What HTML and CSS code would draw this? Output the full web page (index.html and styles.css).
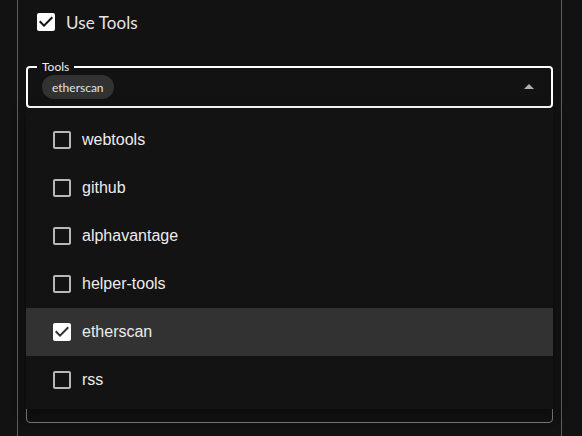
FILE: index.html
```html
<!DOCTYPE html>
<html>
<head>
<meta charset="utf-8">
<link rel="stylesheet" href="styles.css">
</head>
<body>
<div class="panel">
  <label class="use-row">
    <svg class="cb" viewBox="0 0 24 24"><path class="on" d="M19 3H5c-1.11 0-2 .9-2 2v14c0 1.1.89 2 2 2h14c1.11 0 2-.9 2-2V5c0-1.1-.89-2-2-2zm-9 14l-5-5 1.41-1.41L10 14.17l7.59-7.59L19 8l-9 9z"/></svg>
    <span class="use-text">Use Tools</span>
  </label>
  <fieldset class="tools-field">
    <legend class="tools-legend">Tools</legend>
    <div class="tools-row">
      <span class="chip">etherscan</span>
      <svg class="arrow" viewBox="0 0 24 24"><path d="m7 14 5-5 5 5z"/></svg>
    </div>
  </fieldset>
  <fieldset class="next-field"></fieldset>
</div>

<div class="menu">
  <ul class="menu-list">
    <li class="item"><svg class="cb" viewBox="0 0 24 24"><path class="off" d="M19 5v14H5V5h14m0-2H5c-1.1 0-2 .9-2 2v14c0 1.1.9 2 2 2h14c1.1 0 2-.9 2-2V5c0-1.1-.9-2-2-2z"/></svg><span>webtools</span></li>
    <li class="item"><svg class="cb" viewBox="0 0 24 24"><path class="off" d="M19 5v14H5V5h14m0-2H5c-1.1 0-2 .9-2 2v14c0 1.1.9 2 2 2h14c1.1 0 2-.9 2-2V5c0-1.1-.9-2-2-2z"/></svg><span>github</span></li>
    <li class="item"><svg class="cb" viewBox="0 0 24 24"><path class="off" d="M19 5v14H5V5h14m0-2H5c-1.1 0-2 .9-2 2v14c0 1.1.9 2 2 2h14c1.1 0 2-.9 2-2V5c0-1.1-.9-2-2-2z"/></svg><span>alphavantage</span></li>
    <li class="item"><svg class="cb" viewBox="0 0 24 24"><path class="off" d="M19 5v14H5V5h14m0-2H5c-1.1 0-2 .9-2 2v14c0 1.1.9 2 2 2h14c1.1 0 2-.9 2-2V5c0-1.1-.9-2-2-2z"/></svg><span>helper-tools</span></li>
    <li class="item selected"><svg class="cb" viewBox="0 0 24 24"><path class="on" d="M19 3H5c-1.11 0-2 .9-2 2v14c0 1.1.89 2 2 2h14c1.11 0 2-.9 2-2V5c0-1.1-.89-2-2-2zm-9 14l-5-5 1.41-1.41L10 14.17l7.59-7.59L19 8l-9 9z"/></svg><span>etherscan</span></li>
    <li class="item"><svg class="cb" viewBox="0 0 24 24"><path class="off" d="M19 5v14H5V5h14m0-2H5c-1.1 0-2 .9-2 2v14c0 1.1.9 2 2 2h14c1.1 0 2-.9 2-2V5c0-1.1-.9-2-2-2z"/></svg><span>rss</span></li>
  </ul>
</div>
</body>
</html>
```

FILE: styles.css
```css
html, body {
  margin: 0;
  padding: 0;
  background: #121212;
  height: 100%;
  overflow: hidden;
}

body {
  font-family: "Lato", "Liberation Sans", sans-serif;
  color: #e6e6e6;
}

.panel {
  box-sizing: border-box;
  margin-left: 17px;
  width: 545px;
  height: 436px;
  border-left: 1px solid #5c5c5c;
  border-right: 1px solid #5c5c5c;
  padding: 0 8px;
}

.use-row {
  display: flex;
  align-items: center;
  height: 44px;
  padding-left: 8px;
  gap: 8px;
}

.cb {
  width: 24px;
  height: 24px;
  flex: none;
  display: block;
}

.cb .on {
  fill: #ffffff;
}

.cb .off {
  fill: rgba(255, 255, 255, 0.7);
}

.use-text {
  font-size: 17px;
  color: #e4e4e4;
  letter-spacing: 0.1px;
}

.tools-field {
  margin: 17px 0 0 0;
  padding: 2px 10px 7px 14px;
  border: 2px solid #ffffff;
  border-radius: 4px;
  min-width: 0;
}

.tools-legend {
  font-size: 12px;
  line-height: 12px;
  color: #f0f0f0;
  padding: 0 5px;
  margin-left: -5px;
}

.tools-row {
  display: flex;
  align-items: center;
  justify-content: space-between;
  height: 24px;
}

.chip {
  display: inline-flex;
  align-items: center;
  height: 24px;
  padding: 0 10px;
  border-radius: 12px;
  background: #323232;
  font-size: 12px;
  color: #e2e2e2;
}

.arrow {
  width: 24px;
  height: 24px;
  fill: #b0b0b0;
  display: block;
}

.next-field {
  margin: 280px 0 0 0;
  padding: 0;
  height: 35px;
  box-sizing: border-box;
  border: 1px solid #7a7a7a;
  border-radius: 4px;
}

.menu {
  position: absolute;
  top: 108px;
  left: 26px;
  width: 527px;
  height: 301px;
  overflow: hidden;
  background: #131313;
  box-shadow: 0 5px 5px -3px rgba(0,0,0,.2), 0 8px 10px 1px rgba(0,0,0,.14), 0 3px 14px 2px rgba(0,0,0,.12);
}

.menu-list {
  list-style: none;
  margin: 0;
  padding: 8px 0;
}

.item {
  display: flex;
  align-items: center;
  height: 48px;
  padding-left: 24px;
  gap: 8px;
  font-family: "Liberation Sans", Arial, sans-serif;
  font-size: 16px;
  color: #ececec;
}

.item.selected {
  background: #323232;
}
```
